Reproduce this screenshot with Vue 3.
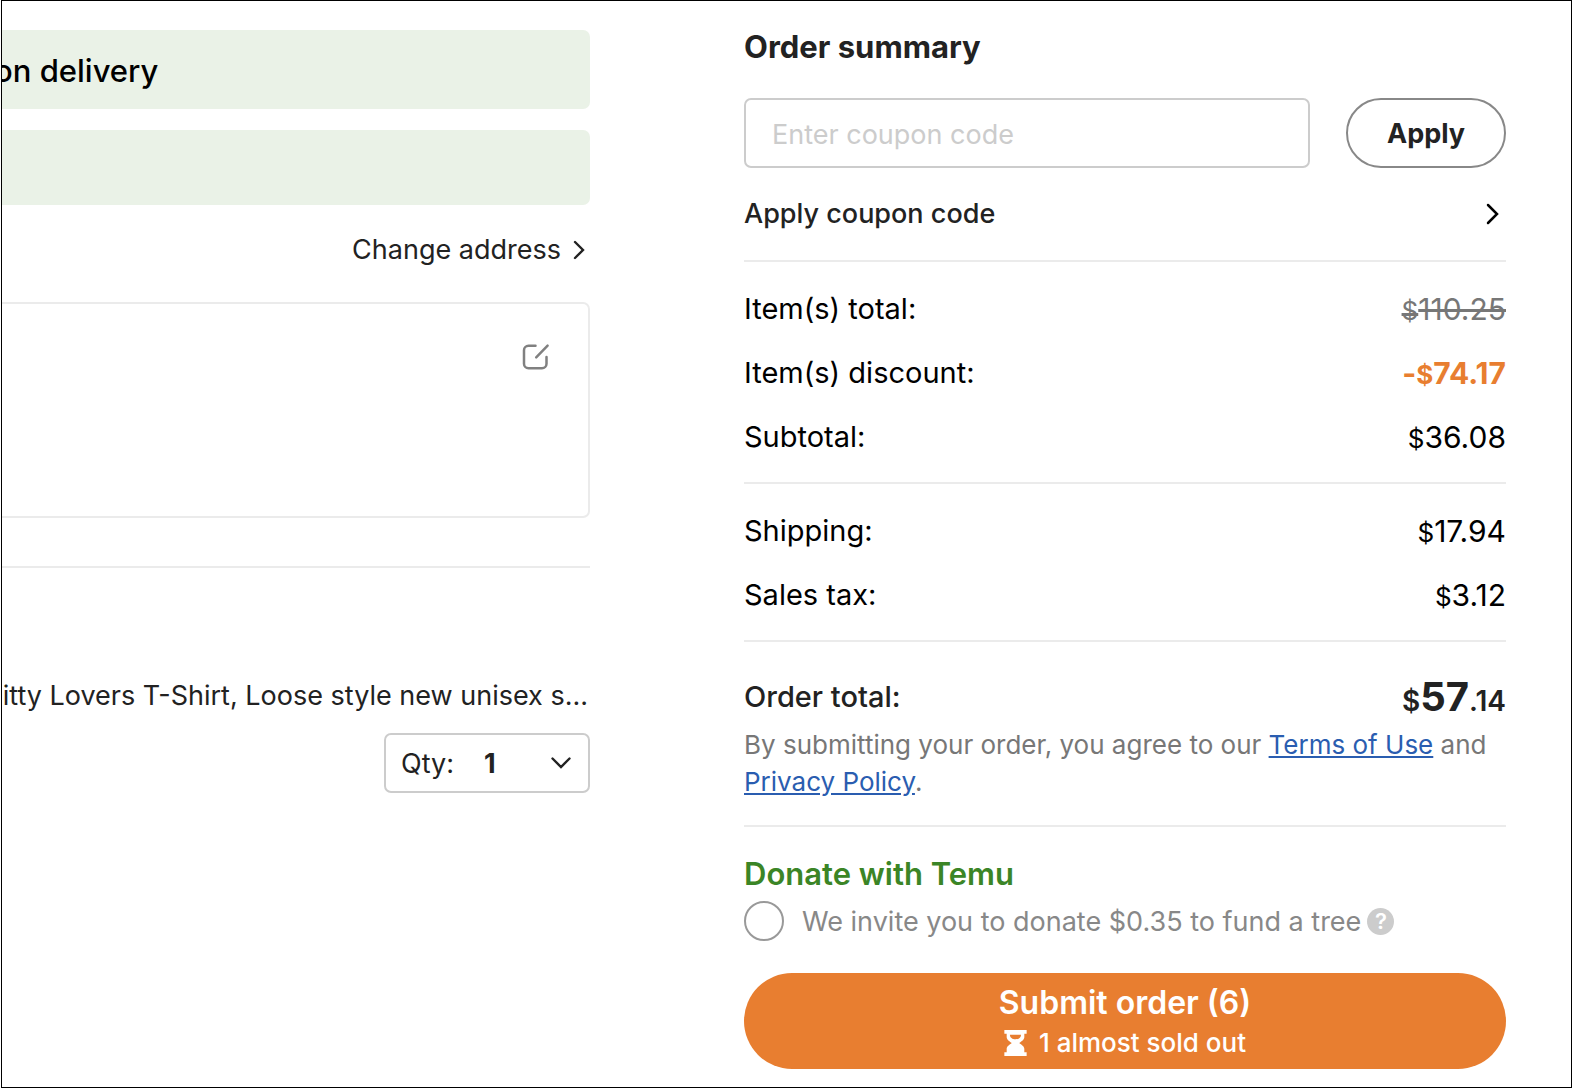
<script setup>
import { ref } from 'vue'

const coupon = ref('')
const quantity = ref('1')
const donate = ref('')

const itemRows = [
  { label: 'Item(s) total:', sign: '', amount: '110.25', kind: 'struck' },
  { label: 'Item(s) discount:', sign: '-', amount: '74.17', kind: 'discount' },
  { label: 'Subtotal:', sign: '', amount: '36.08', kind: 'plain' },
]
const feeRows = [
  { label: 'Shipping:', sign: '', amount: '17.94', kind: 'plain' },
  { label: 'Sales tax:', sign: '', amount: '3.12', kind: 'plain' },
]
</script>

<template>
  <div class="page">
    <main class="checkout">
      <section class="details">
        <div class="banner banner-text"><span>on delivery</span></div>
        <div class="banner banner-empty"></div>
        <a class="change" href="#address">
          Change address
          <svg width="12" height="20" viewBox="0 0 12 20" aria-hidden="true">
            <path d="M2 2 10 10l-8 8" fill="none" stroke="currentColor" stroke-width="2.4" stroke-linecap="round" />
          </svg>
        </a>
        <div class="card">
          <button class="edit" type="button" aria-label="Edit address">
            <svg width="28" height="28" viewBox="0 0 28 28" aria-hidden="true">
              <path
                d="M13.5 2.8H6.500a4.500 4.500 0 0 0-4.500 4.500v13.400a4.500 4.500 0 0 0 4.500 4.500h13.500a4.500 4.500 0 0 0 4.500-4.500V14M14.200 14.300 25.600 2.600"
                fill="none"
                stroke="currentColor"
                stroke-width="2.500"
                stroke-linecap="round"
              />
            </svg>
          </button>
        </div>
        <hr class="rule details-rule" />
        <p class="product"><span>itty Lovers T-Shirt, Loose style new unisex s...</span></p>
        <div class="qty">
          <label for="qty">Qty:</label>
          <select id="qty" v-model="quantity">
            <option>1</option>
            <option>2</option>
            <option>3</option>
          </select>
          <svg width="20" height="12" viewBox="0 0 20 12" aria-hidden="true">
            <path d="M1.500 1.500 10 10l8.500-8.500" fill="none" stroke="currentColor" stroke-width="2.400" stroke-linecap="round" />
          </svg>
        </div>
      </section>

      <section class="summary">
        <h1>Order summary</h1>
        <form class="coupon" @submit.prevent>
          <input v-model="coupon" type="text" aria-label="Coupon code" placeholder="Enter coupon code" />
          <button type="submit">Apply</button>
        </form>
        <a class="coupon-link" href="#coupons">
          Apply coupon code
          <svg width="14" height="24" viewBox="0 0 14 24" aria-hidden="true">
            <path d="M2 3 11 12 2 21" fill="none" stroke="#000" stroke-width="2.500" stroke-linecap="round" />
          </svg>
        </a>
        <hr class="rule" />
        <dl class="rows">
          <div v-for="row in itemRows" :key="row.label">
            <dt>{{ row.label }}</dt>
            <dd :class="row.kind">{{ row.sign }}<small>$</small>{{ row.amount }}</dd>
          </div>
        </dl>
        <hr class="rule" />
        <dl class="rows">
          <div v-for="row in feeRows" :key="row.label">
            <dt>{{ row.label }}</dt>
            <dd :class="row.kind">{{ row.sign }}<small>$</small>{{ row.amount }}</dd>
          </div>
        </dl>
        <hr class="rule" />
        <div class="total">
          <span>Order total:</span>
          <strong><small>$</small>57<small>.14</small></strong>
        </div>
        <p class="terms">
          By submitting your order, you agree to our <a href="#terms">Terms of Use</a> and
          <a href="#privacy">Privacy Policy</a>.
        </p>
        <hr class="rule" />
        <h2>Donate with Temu</h2>
        <div class="donate">
          <input id="donate" v-model="donate" type="radio" value="tree" />
          <label for="donate">We invite you to donate $0.35 to fund a tree</label>
          <button type="button" class="help" aria-label="About this donation">?</button>
        </div>
        <button class="submit" type="button">
          <span class="submit-title">Submit order (6)</span>
          <span class="submit-note">
            <svg width="23" height="26" viewBox="0 0 24 28" aria-hidden="true">
              <path
                d="M0 0h24v4h-2.500v3.500c0 3-3 4.600-5.500 6.500 2.500 1.900 5.500 3.500 5.500 6.500V24H24v4H0v-4h2.500v-3.500c0-3 3-4.600 5.500-6.500-2.500-1.900-5.500-3.500-5.500-6.500V4H0z"
                fill="#fff"
              />
              <path d="M6 5h12c0 3-2.500 5-6 5s-6-2-6-5z" fill="#e87e30" />
            </svg>
            1 almost sold out
          </span>
        </button>
      </section>
    </main>
  </div>
</template>

<style>
body {
  margin: 0;
  background: #fff;
}
</style>

<style scoped>
.page {
  padding: 0 0 0 1px;
  font-family: Inter, 'Liberation Sans', sans-serif;
  font-size: 27px;
  color: #222;
}
.page * {
  box-sizing: border-box;
}
h1,
h2,
p,
dl,
dd {
  margin: 0;
}
button,
input,
select {
  font: inherit;
  color: inherit;
  margin: 0;
}
button {
  padding: 0;
  border: 0;
  background: none;
  cursor: pointer;
}
small {
  line-height: 1;
}
.checkout {
  display: grid;
  grid-template-columns: minmax(0, 588fr) minmax(0, 762fr);
  column-gap: 154px;
  padding: 29px 65px 18px 0;
  border: 1px solid #000;
}
.rule {
  width: 100%;
  height: 2px;
  margin: 0;
  border: 0;
  background: #ebebeb;
}

.details {
  display: flex;
  flex-direction: column;
  align-items: flex-end;
}
.banner {
  width: 100%;
  border-radius: 0 7px 7px 0;
  background: #eaf2e7;
}
.banner-text {
  display: flex;
  align-items: center;
  height: 79px;
  padding-top: 2px;
  overflow: hidden;
  font-size: 31px;
  font-weight: 500;
  color: #000;
}
.banner-text span {
  margin-left: -8px;
}
.banner-empty {
  height: 75px;
  margin-top: 21px;
}
.change {
  display: flex;
  align-items: center;
  gap: 12px;
  margin: 25px 5px 0 0;
  line-height: 40px;
  color: inherit;
  text-decoration: none;
}
.card {
  display: flex;
  justify-content: flex-end;
  align-items: flex-start;
  width: 100%;
  height: 216px;
  margin-top: 32px;
  padding: 39px 38px 0 0;
  border: solid #ebebeb;
  border-width: 2px 2px 2px 0;
  border-radius: 0 7px 7px 0;
}
.edit {
  display: flex;
  color: #808080;
}
.details-rule {
  margin-top: 48px;
}
.product {
  display: flex;
  justify-content: flex-end;
  width: 100%;
  margin-top: 108px;
  padding-right: 2px;
  overflow: hidden;
  line-height: 40px;
  white-space: nowrap;
}
.qty {
  display: flex;
  align-items: center;
  width: 206px;
  height: 60px;
  margin-top: 17px;
  padding: 0 17px 0 15px;
  border: 2px solid #ccc;
  border-radius: 7px;
}
.qty select {
  flex: 1;
  min-width: 0;
  padding: 0 0 0 30px;
  border: 0;
  background: none;
  appearance: none;
  font-weight: 700;
}

.summary {
  display: flex;
  flex-direction: column;
}
h1 {
  font-size: 31px;
  font-weight: 700;
  line-height: 34px;
}
.coupon {
  display: flex;
  gap: 36px;
  margin-top: 34px;
}
.coupon input {
  flex: 1;
  min-width: 0;
  height: 70px;
  padding: 2px 26px 0;
  border: 2px solid #ccc;
  border-radius: 7px;
  background: #fff;
}
.coupon input::placeholder {
  color: #ccc;
  opacity: 1;
}
.coupon button {
  width: 160px;
  height: 70px;
  border: 2px solid #888;
  border-radius: 35px;
  font-weight: 700;
}
.coupon-link {
  display: flex;
  align-items: center;
  justify-content: space-between;
  margin: 26px 0;
  padding-right: 6px;
  font-weight: 500;
  line-height: 40px;
  color: inherit;
  text-decoration: none;
}
.rows {
  display: flex;
  flex-direction: column;
  gap: 24px;
  padding: 27px 0 25px;
  font-size: 29px;
  line-height: 40px;
  color: #000;
}
.rows div {
  display: flex;
  justify-content: space-between;
}
.rows dd {
  font-size: 30px;
}
.rows small {
  font-size: 26px;
}
.rows .struck {
  color: #777;
  text-decoration: line-through;
}
.rows .discount {
  font-weight: 700;
  color: #e87e30;
}
.total {
  display: flex;
  align-items: center;
  justify-content: space-between;
  height: 52px;
  margin-top: 28px;
  font-size: 29px;
  font-weight: 500;
}
.total strong {
  font-size: 40px;
  font-weight: 700;
}
.total small {
  font-size: 28px;
  font-weight: 600;
}
.terms {
  margin: 4px 0 25px;
  font-size: 26px;
  line-height: 37px;
  color: #777;
}
.terms a {
  color: #2a5db0;
}
h2 {
  margin-top: 27px;
  font-size: 31px;
  font-weight: 600;
  line-height: 40px;
  color: #3b8526;
}
.donate {
  display: flex;
  align-items: center;
  margin-top: 7px;
  color: #888;
}
.donate input {
  width: 40px;
  height: 40px;
  margin-right: 18px;
  border: 2px solid #999;
  border-radius: 50%;
  appearance: none;
}
.donate input:checked {
  border: 12px solid #3b8526;
}
.help {
  width: 27px;
  height: 27px;
  margin-left: 6px;
  border-radius: 50%;
  background: #ccc;
  font-size: 22px;
  font-weight: 600;
  line-height: 27px;
  color: #fff;
}
.submit {
  display: flex;
  flex-direction: column;
  align-items: center;
  justify-content: center;
  height: 96px;
  margin-top: 32px;
  border-radius: 48px;
  background: #e87e30;
  color: #fff;
}
.submit-title {
  font-size: 32px;
  font-weight: 600;
  line-height: 44px;
}
.submit-note {
  display: flex;
  align-items: center;
  gap: 12px;
  font-size: 26px;
  font-weight: 500;
  line-height: 36px;
}
</style>
